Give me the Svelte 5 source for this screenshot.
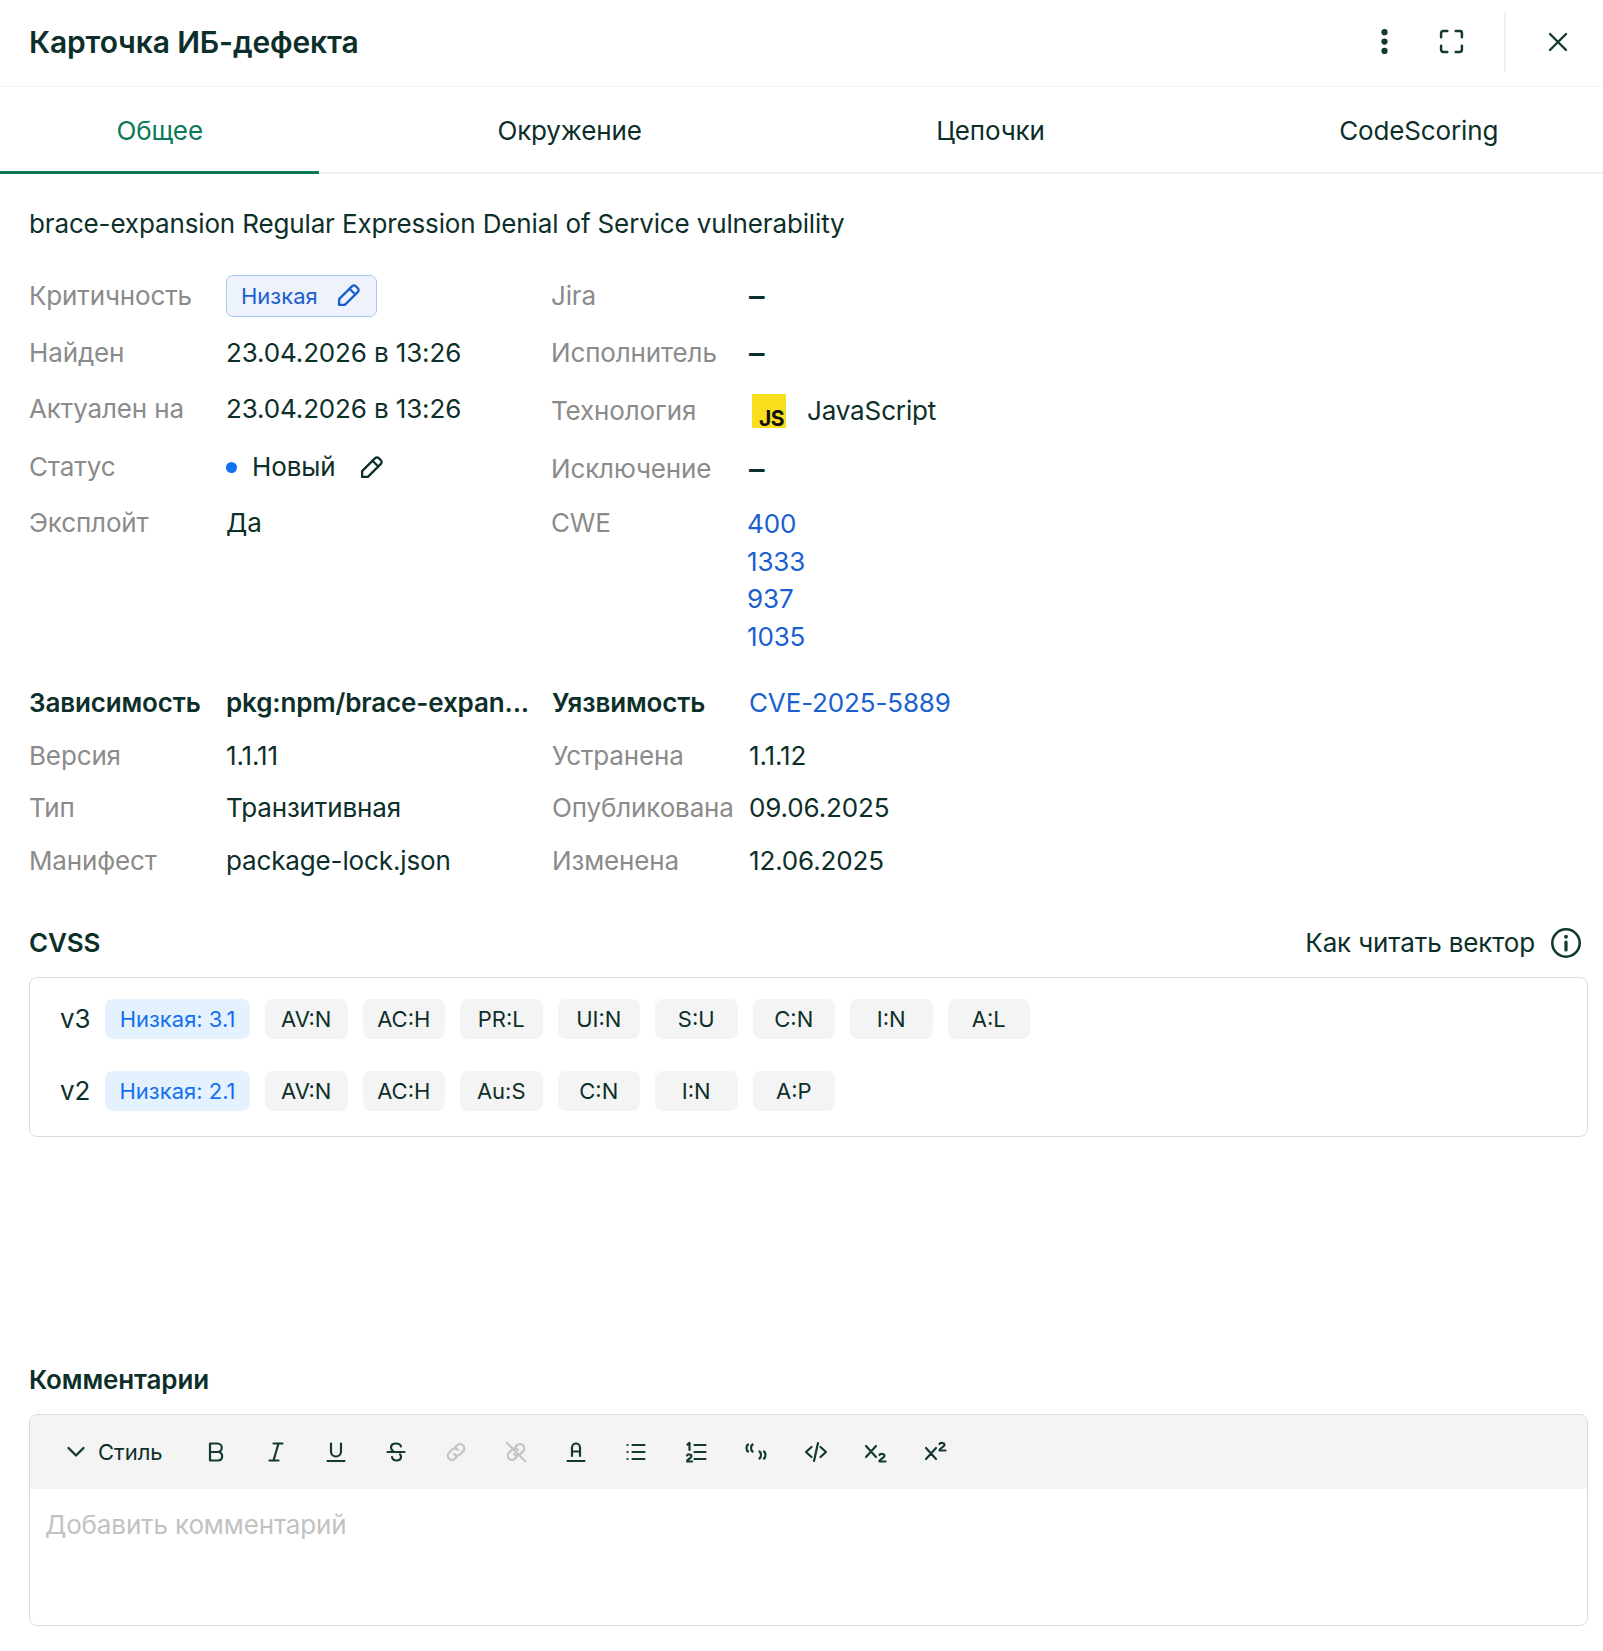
<script>
  const tabs = ['Общее', 'Окружение', 'Цепочки', 'CodeScoring']
  const depRows = [
    ['Версия', '1.1.11', 'Устранена', '1.1.12'],
    ['Тип', 'Транзитивная', 'Опубликована', '09.06.2025'],
    ['Манифест', 'package-lock.json', 'Изменена', '12.06.2025']
  ]
  const cwe = ['400', '1333', '937', '1035']
  const cvss = [
    { v: 'v3', score: 'Низкая: 3.1', items: ['AV:N', 'AC:H', 'PR:L', 'UI:N', 'S:U', 'C:N', 'I:N', 'A:L'] },
    { v: 'v2', score: 'Низкая: 2.1', items: ['AV:N', 'AC:H', 'Au:S', 'C:N', 'I:N', 'A:P'] }
  ]
</script>

{#snippet pencil()}
  <svg class="pencil" viewBox="0 0 24 24" fill="none" stroke="currentColor" stroke-width="2.2" stroke-linejoin="round" stroke-linecap="round">
    <path d="M3 21v-5.500L15.500 3a2.400 2.400 0 0 1 3.400 0l2.100 2.100a2.400 2.400 0 0 1 0 3.400L8.500 21z" />
    <path d="M13 5.500l5.500 5.500" />
  </svg>
{/snippet}

<div class="card">
  <header class="top">
    <h1>Карточка ИБ-дефекта</h1>
    <div class="top-actions">
      <svg class="ico-dots" viewBox="0 0 6 24" fill="#123a33">
        <circle cx="3" cy="3" r="3" /><circle cx="3" cy="12" r="3" /><circle cx="3" cy="21" r="3" />
      </svg>
      <svg class="ico-full" viewBox="0 0 24 24" fill="none" stroke="#123a33" stroke-width="2.400" stroke-linecap="round" stroke-linejoin="round">
        <path d="M2 8V4a2 2 0 0 1 2-2h4M16 2h4a2 2 0 0 1 2 2v4M22 16v4a2 2 0 0 1-2 2h-4M8 22H4a2 2 0 0 1-2-2v-4" />
      </svg>
      <span class="divider"></span>
      <svg class="ico-close" viewBox="0 0 20 20" fill="none" stroke="#123a33" stroke-width="2.400" stroke-linecap="round">
        <path d="M2 2l16 16M18 2L2 18" />
      </svg>
    </div>
  </header>

  <nav class="tabs">
    {#each tabs as tab, i}
      <div class="tab" class:active={i === 0}>{tab}</div>
    {/each}
  </nav>

  <main class="body">
    <p class="summary">brace-expansion Regular Expression Denial of Service vulnerability</p>

    <section class="info">
      <div class="col col-left">
        <div class="row first"><span class="label">Критичность</span>
          <span class="severity">Низкая {@render pencil()}</span></div>
        <div class="row"><span class="label">Найден</span><span>23.04.2026 в 13:26</span></div>
        <div class="row"><span class="label">Актуален на</span><span>23.04.2026 в 13:26</span></div>
        <div class="row low"><span class="label">Статус</span>
          <span class="status"><i class="dot"></i>Новый {@render pencil()}</span></div>
        <div class="row"><span class="label">Эксплойт</span><span>Да</span></div>
      </div>
      <div class="col">
        <div class="row first"><span class="label">Jira</span><span class="dash">–</span></div>
        <div class="row"><span class="label">Исполнитель</span><span class="dash">–</span></div>
        <div class="row low"><span class="label">Технология</span>
          <span class="js-value"><span class="js-logo"><b>JS</b></span>JavaScript</span></div>
        <div class="row low"><span class="label">Исключение</span><span class="dash">–</span></div>
        <div class="row high"><span class="label">CWE</span>
          <span class="cwe">{#each cwe as id}<a href="#cwe">{id}</a>{/each}</span></div>
      </div>
    </section>

    <section class="deps">
      <b>Зависимость</b>
      <b class="clip">pkg:npm/brace-expan...</b>
      <b>Уязвимость</b>
      <a href="#cve">CVE-2025-5889</a>
      {#each depRows as r}
        <span class="label">{r[0]}</span><span>{r[1]}</span>
        <span class="label">{r[2]}</span><span>{r[3]}</span>
      {/each}
    </section>

    <div class="cvss-head">
      <b>CVSS</b>
      <span class="howto">Как читать вектор
        <svg viewBox="0 0 32 32" fill="none" stroke="#123a33" stroke-width="2.600" stroke-linecap="round">
          <circle cx="16" cy="16" r="13.700" /><path d="M16 15v8" stroke-width="3.200" /><path d="M16 9.600v.2" stroke-width="3.800" />
        </svg>
      </span>
    </div>
    <div class="cvss-box">
      {#each cvss as line}
        <div class="cvss-line">
          <span class="ver">{line.v}</span>
          <span class="chip score">{line.score}</span>
          {#each line.items as item}<span class="chip">{item}</span>{/each}
        </div>
      {/each}
    </div>

    <div class="comments">
      <b>Комментарии</b>
      <div class="editor">
        <div class="toolbar">
          <span class="style-btn">
            <svg viewBox="0 0 20 20" fill="none" stroke="#123a33" stroke-width="2.400" stroke-linecap="round" stroke-linejoin="round"><path d="M2.500 6l7.500 7.500L17.500 6" /></svg>
            Стиль
          </span>
          <div class="tools">
            <svg viewBox="0 0 24 24"><path d="M6 3.500h7.500a4.200 4.200 0 0 1 0 8.500H6zM6 12h8.500a4.300 4.300 0 0 1 0 8.500H6z" /></svg>
            <svg viewBox="0 0 24 24"><path d="M9.500 3.500h9M5.500 20.500h9M14.500 3.500l-5 17" /></svg>
            <svg viewBox="0 0 24 24"><path d="M7 3.500v8a5 5 0 0 0 10 0v-8M3.500 21h17" /></svg>
            <svg viewBox="0 0 24 24"><path d="M17 6.500C16.500 4.500 14.500 3.500 12 3.500c-3 0-5 1.500-5 4 0 1.500.7 2.800 2 3.500M3.500 12h17M8 17c.5 2.200 2 3.500 4.500 3.500 3 0 4.500-1.700 4.500-3.700 0-1-.3-1.800-1-2.500" /></svg>
            <svg class="off" viewBox="0 0 24 24"><path d="M10 14a4 4 0 0 0 6 .4l3-3a4.200 4.200 0 0 0-6-6l-1.500 1.500M14 10a4 4 0 0 0-6-.4l-3 3a4.200 4.200 0 0 0 6 6l1.500-1.500" /></svg>
            <svg class="off" viewBox="0 0 24 24"><path d="M10 14a4 4 0 0 0 6 .4l3-3a4.200 4.200 0 0 0-6-6l-1.500 1.500M14 10a4 4 0 0 0-6-.4l-3 3a4.200 4.200 0 0 0 6 6l1.500-1.500M2.500 2.500l19 19" /></svg>
            <svg viewBox="0 0 24 24"><path d="M8 16V7.500a4 4 0 0 1 8 0V16M8 11.500h8M3.500 21h17" /></svg>
            <svg viewBox="0 0 24 24"><path d="M8.500 5h12M8.500 12h12M8.500 19h12M3.500 5h.1M3.500 12h.1M3.500 19h.1" /></svg>
            <svg viewBox="0 0 24 24"><path d="M10.500 5h11M10.500 12h11M10.500 19h11M3.500 4.500L5.500 3v7M3 15.500c.5-1.500 4.500-1.500 4.500.8 0 2-4.500 3-4.500 5.200h5" /></svg>
            <svg viewBox="0 0 24 24"><path d="M4 4.500c-2 1.500-2 5.500 0 7M8.500 4.500c-2 1.500-2 5.500 0 7M15.500 11.500c2 1.500 2 5.500 0 7M20 11.500c2 1.500 2 5.500 0 7" /></svg>
            <svg viewBox="0 0 24 24"><path d="M7.500 7L2 12l5.500 5M16.500 7l5.500 5-5.500 5M14 3L10 21" /></svg>
            <svg viewBox="0 0 24 24"><path d="M2 6l10 11M12 6L2 17M15.500 15c.5-1.500 5-1.500 5 .8 0 2.200-5 3-5 5.700h6" /></svg>
            <svg viewBox="0 0 24 24"><path d="M2 8l10 11M12 8L2 19M15.500 4c.5-1.500 5-1.500 5 .8 0 2.200-5 3-5 5.700h6" /></svg>
          </div>
        </div>
        <div class="placeholder">Добавить комментарий</div>
      </div>
    </div>
  </main>
</div>

<style>
  :global(body) {
    margin: 0;
    background: #fff;
  }

  .card {
    height: 1651px;
    overflow: hidden;
    font-family: Inter, 'Noto Sans', sans-serif;
    font-size: 26px;
    letter-spacing: -0.14px;
    line-height: 36px;
    color: #0d2f2a;
    display: flex;
    flex-direction: column;
  }

  b {
    font-weight: 600;
  }

  a {
    color: #1a5fd0;
    text-decoration: none;
  }

  .top {
    height: 87px;
    flex: none;
    display: flex;
    align-items: center;
    justify-content: space-between;
    padding: 0 0 3px 29px;
    box-sizing: border-box;
    border-bottom: 1px solid #f3f3f3;
  }

  h1 {
    margin: 0;
    font-size: 30px;
    font-weight: 600;
  }

  .top-actions {
    display: flex;
    align-items: center;
  }

  .ico-dots {
    width: 7px;
    height: 25px;
    margin-right: 51px;
  }

  .ico-full {
    width: 25px;
    height: 25px;
    margin-right: 40px;
  }

  .divider {
    width: 2px;
    height: 60px;
    background: #f0f0f0;
    margin-right: 42px;
  }

  .ico-close {
    width: 20px;
    height: 20px;
    margin-right: 35px;
  }

  .tabs {
    height: 87px;
    flex: none;
    display: flex;
    gap: 61.500px;
    box-sizing: border-box;
    border-bottom: 2px solid #f1f1f1;
  }

  .tab {
    flex: none;
    box-sizing: border-box;
    height: 87px;
    padding: 0 116.500px;
    line-height: 88px;
  }

  .tab.active {
    color: #0b7a5b;
    border-bottom: 3px solid #0b7a5b;
  }

  .body {
    padding: 0 15px 0 29px;
    flex: 1;
    display: flex;
    flex-direction: column;
  }

  .summary {
    margin: 32px 0 0;
  }

  .label {
    color: #8b8b8b;
  }

  .info {
    display: flex;
    margin-top: 34px;
  }

  .col {
    display: flex;
    flex-direction: column;
    gap: 20px;
  }

  .col-left {
    width: 522px;
    flex: none;
  }

  .row {
    display: flex;
    align-items: flex-start;
  }

  .row.first {
    height: 39px;
    align-items: center;
  }

  .row.low {
    margin-top: 2px;
  }

  .row.high {
    margin-top: -2px;
  }

  .row > .label {
    width: 197px;
    flex: none;
  }

  .dash {
    font-size: 31px;
    font-weight: 500;
    margin-left: 1px;
  }

  .severity {
    display: inline-flex;
    flex: none;
    align-items: center;
    gap: 18px;
    height: 42px;
    box-sizing: border-box;
    padding: 0 15px 0 14px;
    font-size: 22px;
    letter-spacing: 0;
    color: #1a5fd0;
    background: #edf2fb;
    border: 1px solid #a9c8f5;
    border-radius: 7px;
  }

  .pencil {
    width: 25px;
    height: 25px;
  }

  .status {
    display: inline-flex;
    align-items: center;
  }

  .status .pencil {
    margin-left: 24px;
  }

  .dot {
    width: 11px;
    height: 11px;
    border-radius: 50%;
    background: #1570ef;
    margin-right: 15px;
  }

  .js-value {
    display: flex;
    align-items: center;
    gap: 21px;
    margin-left: 4px;
  }

  .js-logo {
    width: 34px;
    height: 34px;
    background: #f7df1e;
    display: flex;
    align-items: flex-end;
    justify-content: flex-end;
    color: #111;
    font-size: 21px;
    line-height: 19px;
    letter-spacing: -0.5px;
    padding-right: 2px;
    box-sizing: border-box;
  }

  .js-logo b {
    font-weight: 700;
  }

  .cwe {
    display: flex;
    flex-direction: column;
    line-height: 37.600px;
    margin-left: -1px;
  }

  .deps {
    display: grid;
    grid-template-columns: 197px 326px 197px 1fr;
    row-gap: 16.500px;
    margin-top: 30px;
  }

  .clip {
    white-space: nowrap;
  }

  .cvss-head {
    display: flex;
    justify-content: space-between;
    align-items: center;
    margin-top: 46px;
  }

  .howto {
    display: flex;
    align-items: center;
    gap: 15px;
    padding-right: 6px;
  }

  .howto svg {
    width: 32px;
    height: 32px;
  }

  .cvss-box {
    margin-top: 16px;
    height: 160px;
    box-sizing: border-box;
    border: 1px solid #dcdcdc;
    border-radius: 8px;
    padding: 21px 30px;
    display: flex;
    flex-direction: column;
    gap: 32px;
  }

  .cvss-line {
    display: flex;
    align-items: center;
    gap: 15px;
  }

  .ver {
    width: 30px;
  }

  .chip {
    width: 82.500px;
    height: 40px;
    display: flex;
    align-items: center;
    justify-content: center;
    font-size: 22px;
    letter-spacing: 0;
    background: #f4f4f4;
    border-radius: 8px;
  }

  .chip.score {
    width: 145px;
    color: #1570ef;
    background: #e4f2ff;
  }

  .comments {
    margin-top: auto;
    margin-bottom: 25px;
  }

  .comments b {
    display: block;
  }

  .editor {
    margin-top: 16px;
    height: 212px;
    box-sizing: border-box;
    border: 1px solid #dcdcdc;
    border-radius: 8px;
    overflow: hidden;
  }

  .toolbar {
    height: 74px;
    background: #f4f4f4;
    display: flex;
    align-items: center;
    padding-left: 36px;
  }

  .style-btn {
    display: flex;
    align-items: center;
    gap: 12px;
    font-size: 22px;
    letter-spacing: 0;
  }

  .style-btn svg {
    width: 20px;
    height: 20px;
  }

  .tools {
    display: flex;
    gap: 36px;
    margin-left: 41px;
  }

  .tools svg {
    width: 24px;
    height: 24px;
    fill: none;
    stroke: #123a33;
    stroke-width: 2.200;
    stroke-linecap: round;
    stroke-linejoin: round;
  }

  .tools svg.off {
    stroke: #c4c4c4;
  }

  .placeholder {
    padding: 18px 15px;
    color: #c2c2c2;
  }
</style>
